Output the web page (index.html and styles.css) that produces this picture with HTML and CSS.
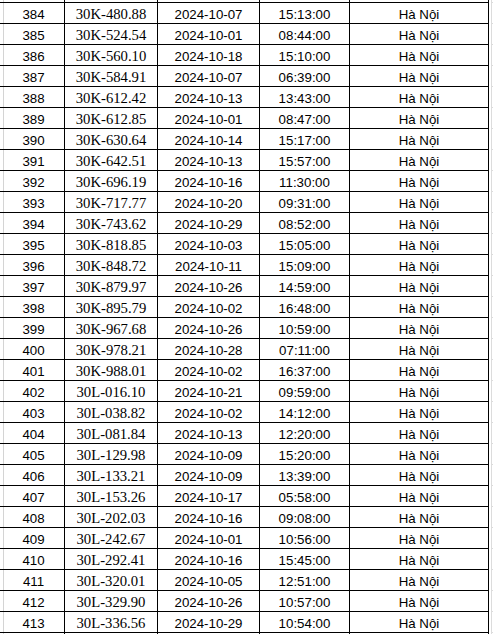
FILE: index.html
```html
<!DOCTYPE html>
<html lang="vi">
<head>
<meta charset="utf-8">
<title>Danh sách</title>
<link rel="stylesheet" href="styles.css">
</head>
<body>
<div class="sheet">
  <div class="row cap"><div class="c c1"></div><div class="c c2"></div><div class="c c3"></div><div class="c c4"></div><div class="c c5"></div><div class="c c6"></div></div>
  <div class="row"><div class="c c1">384</div><div class="c c2">30K-480.88</div><div class="c c3">2024-10-07</div><div class="c c4">15:13:00</div><div class="c c5">Hà Nội</div><div class="c c6"></div></div>
  <div class="row"><div class="c c1">385</div><div class="c c2">30K-524.54</div><div class="c c3">2024-10-01</div><div class="c c4">08:44:00</div><div class="c c5">Hà Nội</div><div class="c c6"></div></div>
  <div class="row"><div class="c c1">386</div><div class="c c2">30K-560.10</div><div class="c c3">2024-10-18</div><div class="c c4">15:10:00</div><div class="c c5">Hà Nội</div><div class="c c6"></div></div>
  <div class="row"><div class="c c1">387</div><div class="c c2">30K-584.91</div><div class="c c3">2024-10-07</div><div class="c c4">06:39:00</div><div class="c c5">Hà Nội</div><div class="c c6"></div></div>
  <div class="row"><div class="c c1">388</div><div class="c c2">30K-612.42</div><div class="c c3">2024-10-13</div><div class="c c4">13:43:00</div><div class="c c5">Hà Nội</div><div class="c c6"></div></div>
  <div class="row"><div class="c c1">389</div><div class="c c2">30K-612.85</div><div class="c c3">2024-10-01</div><div class="c c4">08:47:00</div><div class="c c5">Hà Nội</div><div class="c c6"></div></div>
  <div class="row"><div class="c c1">390</div><div class="c c2">30K-630.64</div><div class="c c3">2024-10-14</div><div class="c c4">15:17:00</div><div class="c c5">Hà Nội</div><div class="c c6"></div></div>
  <div class="row"><div class="c c1">391</div><div class="c c2">30K-642.51</div><div class="c c3">2024-10-13</div><div class="c c4">15:57:00</div><div class="c c5">Hà Nội</div><div class="c c6"></div></div>
  <div class="row"><div class="c c1">392</div><div class="c c2">30K-696.19</div><div class="c c3">2024-10-16</div><div class="c c4">11:30:00</div><div class="c c5">Hà Nội</div><div class="c c6"></div></div>
  <div class="row"><div class="c c1">393</div><div class="c c2">30K-717.77</div><div class="c c3">2024-10-20</div><div class="c c4">09:31:00</div><div class="c c5">Hà Nội</div><div class="c c6"></div></div>
  <div class="row"><div class="c c1">394</div><div class="c c2">30K-743.62</div><div class="c c3">2024-10-29</div><div class="c c4">08:52:00</div><div class="c c5">Hà Nội</div><div class="c c6"></div></div>
  <div class="row"><div class="c c1">395</div><div class="c c2">30K-818.85</div><div class="c c3">2024-10-03</div><div class="c c4">15:05:00</div><div class="c c5">Hà Nội</div><div class="c c6"></div></div>
  <div class="row"><div class="c c1">396</div><div class="c c2">30K-848.72</div><div class="c c3">2024-10-11</div><div class="c c4">15:09:00</div><div class="c c5">Hà Nội</div><div class="c c6"></div></div>
  <div class="row"><div class="c c1">397</div><div class="c c2">30K-879.97</div><div class="c c3">2024-10-26</div><div class="c c4">14:59:00</div><div class="c c5">Hà Nội</div><div class="c c6"></div></div>
  <div class="row"><div class="c c1">398</div><div class="c c2">30K-895.79</div><div class="c c3">2024-10-02</div><div class="c c4">16:48:00</div><div class="c c5">Hà Nội</div><div class="c c6"></div></div>
  <div class="row"><div class="c c1">399</div><div class="c c2">30K-967.68</div><div class="c c3">2024-10-26</div><div class="c c4">10:59:00</div><div class="c c5">Hà Nội</div><div class="c c6"></div></div>
  <div class="row"><div class="c c1">400</div><div class="c c2">30K-978.21</div><div class="c c3">2024-10-28</div><div class="c c4">07:11:00</div><div class="c c5">Hà Nội</div><div class="c c6"></div></div>
  <div class="row"><div class="c c1">401</div><div class="c c2">30K-988.01</div><div class="c c3">2024-10-02</div><div class="c c4">16:37:00</div><div class="c c5">Hà Nội</div><div class="c c6"></div></div>
  <div class="row"><div class="c c1">402</div><div class="c c2">30L-016.10</div><div class="c c3">2024-10-21</div><div class="c c4">09:59:00</div><div class="c c5">Hà Nội</div><div class="c c6"></div></div>
  <div class="row"><div class="c c1">403</div><div class="c c2">30L-038.82</div><div class="c c3">2024-10-02</div><div class="c c4">14:12:00</div><div class="c c5">Hà Nội</div><div class="c c6"></div></div>
  <div class="row"><div class="c c1">404</div><div class="c c2">30L-081.84</div><div class="c c3">2024-10-13</div><div class="c c4">12:20:00</div><div class="c c5">Hà Nội</div><div class="c c6"></div></div>
  <div class="row"><div class="c c1">405</div><div class="c c2">30L-129.98</div><div class="c c3">2024-10-09</div><div class="c c4">15:20:00</div><div class="c c5">Hà Nội</div><div class="c c6"></div></div>
  <div class="row"><div class="c c1">406</div><div class="c c2">30L-133.21</div><div class="c c3">2024-10-09</div><div class="c c4">13:39:00</div><div class="c c5">Hà Nội</div><div class="c c6"></div></div>
  <div class="row"><div class="c c1">407</div><div class="c c2">30L-153.26</div><div class="c c3">2024-10-17</div><div class="c c4">05:58:00</div><div class="c c5">Hà Nội</div><div class="c c6"></div></div>
  <div class="row"><div class="c c1">408</div><div class="c c2">30L-202.03</div><div class="c c3">2024-10-16</div><div class="c c4">09:08:00</div><div class="c c5">Hà Nội</div><div class="c c6"></div></div>
  <div class="row"><div class="c c1">409</div><div class="c c2">30L-242.67</div><div class="c c3">2024-10-01</div><div class="c c4">10:56:00</div><div class="c c5">Hà Nội</div><div class="c c6"></div></div>
  <div class="row"><div class="c c1">410</div><div class="c c2">30L-292.41</div><div class="c c3">2024-10-16</div><div class="c c4">15:45:00</div><div class="c c5">Hà Nội</div><div class="c c6"></div></div>
  <div class="row"><div class="c c1">411</div><div class="c c2">30L-320.01</div><div class="c c3">2024-10-05</div><div class="c c4">12:51:00</div><div class="c c5">Hà Nội</div><div class="c c6"></div></div>
  <div class="row"><div class="c c1">412</div><div class="c c2">30L-329.90</div><div class="c c3">2024-10-26</div><div class="c c4">10:57:00</div><div class="c c5">Hà Nội</div><div class="c c6"></div></div>
  <div class="row"><div class="c c1">413</div><div class="c c2">30L-336.56</div><div class="c c3">2024-10-29</div><div class="c c4">10:54:00</div><div class="c c5">Hà Nội</div><div class="c c6"></div></div>
  <div class="row tail"><div class="c c1"></div><div class="c c2"></div><div class="c c3"></div><div class="c c4"></div><div class="c c5"></div><div class="c c6"></div></div>
</div>
</body>
</html>
```

FILE: styles.css
```css
html, body {
  margin: 0;
  padding: 0;
  background: #fff;
}
.sheet {
  width: 493px;
  overflow: hidden;
  color: #000;
  font-family: "Liberation Sans", Arial, sans-serif;
  font-size: 13.3px;
}
.row {
  display: grid;
  grid-template-columns: 65px 93px 102px 90px 139px 1fr;
  height: 21px;
}
.row.cap {
  height: 3px;
}
.row.tail {
  height: 2px;
}
.row.tail .c {
  border-bottom: none;
}
.c {
  box-sizing: border-box;
  border-right: 1px solid #000;
  border-bottom: 1px solid #000;
  text-align: center;
  white-space: nowrap;
  padding-top: 4px;
  line-height: 16px;
  overflow: hidden;
}
.cap .c, .tail .c {
  padding: 0;
}
.c1 {
  background: linear-gradient(#d4d4d4, #d4d4d4) no-repeat 3px 0 / 1px 100%;
  padding-left: 3px;
}
.c2 {
  font-family: "Liberation Serif", "Times New Roman", serif;
  font-size: 14.7px;
  padding-top: 3px;
}
.c6 {
  border-right: none;
  border-bottom-color: #dcdcdc;
  margin-left: 2px;
  border-left: 1px solid #dcdcdc;
}
```
